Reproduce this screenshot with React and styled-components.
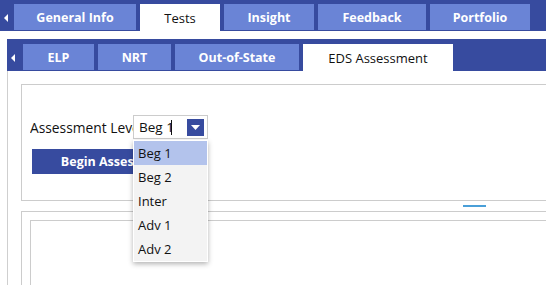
import React from 'react';
import styled, { createGlobalStyle } from 'styled-components';

const mainTabs = [
  { label: 'General Info', width: 122 },
  { label: 'Tests', width: 80, active: true },
  { label: 'Insight', width: 90 },
  { label: 'Feedback', width: 108 },
  { label: 'Portfolio', width: 100 },
];

const testTabs = [
  { label: 'ELP', width: 71 },
  { label: 'NRT', width: 73 },
  { label: 'Out-of-State', width: 124 },
  { label: 'EDS Assessment', width: 150, active: true },
];

const levels = ['Beg 1', 'Beg 2', 'Inter', 'Adv 1', 'Adv 2'];

export default function App() {
  return (
    <>
      <GlobalStyle />
      <Page>
        <TopBar>
          <ScrollArrow $width={14} />
          <TabList $gap={4}>
            {mainTabs.map((t) => (
              <MainTab key={t.label} $width={t.width} $active={t.active}>
                {t.label}
              </MainTab>
            ))}
          </TabList>
        </TopBar>

        <Section>
          <SubBar>
            <ScrollArrow $width={16} />
            <TabList $gap={4}>
              {testTabs.map((t) => (
                <MainTab key={t.label} $width={t.width} $active={t.active}>
                  {t.label}
                </MainTab>
              ))}
            </TabList>
          </SubBar>

          <Content>
            <Panel>
              <FieldRow>
                <Label>Assessment Level</Label>
                <SelectWrap>
                  <SelectBox>
                    <SelectValue>
                      Beg 1<Caret />
                    </SelectValue>
                    <SelectButton>
                      <svg width="9" height="5" viewBox="0 0 9 5">
                        <path d="M0 0h9L4.5 5z" fill="#fff" />
                      </svg>
                    </SelectButton>
                  </SelectBox>
                  <Menu>
                    {levels.map((l, i) => (
                      <MenuItem key={l} $selected={i === 0}>
                        {l}
                      </MenuItem>
                    ))}
                  </Menu>
                </SelectWrap>
              </FieldRow>
              <BeginButton>Begin Assessment</BeginButton>
            </Panel>

            <Divider>
              <Marker />
            </Divider>

            <Panel $tall>
              <InnerBox />
            </Panel>
          </Content>
        </Section>
      </Page>
    </>
  );
}

const GlobalStyle = createGlobalStyle`
  html, body {
    margin: 0;
    padding: 0;
    background: #fff;
    overflow: hidden;
  }
  body {
    font-family: "Open Sans", "Noto Sans", sans-serif;
  }
`;

const Page = styled.div`
  width: 546px;
  height: 285px;
  overflow: hidden;
`;

const TopBar = styled.div`
  display: flex;
  align-items: flex-start;
  height: 31px;
  padding-top: 4px;
  box-sizing: border-box;
  background: #374b9f;
`;

const ScrollArrow = styled.div`
  position: relative;
  flex: 0 0 ${({ $width }) => $width}px;
  align-self: stretch;
  &::before {
    content: '';
    position: absolute;
    left: 4px;
    top: 50%;
    margin-top: -4px;
    border-top: 4px solid transparent;
    border-bottom: 4px solid transparent;
    border-right: 4px solid #fff;
  }
`;

const TabList = styled.div`
  display: flex;
  gap: ${({ $gap }) => $gap}px;
`;

const MainTab = styled.div`
  display: flex;
  align-items: center;
  justify-content: center;
  width: ${({ $width }) => $width}px;
  height: ${({ $active }) => ($active ? 27 : 26)}px;
  background: ${({ $active }) => ($active ? '#fff' : '#6a84d6')};
  color: ${({ $active }) => ($active ? '#111' : '#fff')};
  font-size: ${({ $active }) => ($active ? 13 : 12.5)}px;
  font-weight: ${({ $active }) => ($active ? 500 : 700)};
  white-space: nowrap;
`;

const Section = styled.div`
  margin-top: 8px;
  margin-left: 7px;
`;

const SubBar = styled.div`
  display: flex;
  align-items: flex-start;
  height: 32px;
  padding-top: 5px;
  box-sizing: border-box;
  background: #374b9f;
`;

const Content = styled.div`
  border-left: 1px solid #cfcfcf;
  padding: 13px 0 0 13px;
  height: 220px;
`;

const Panel = styled.div`
  border: 1px solid #cccccc;
  border-right: none;
  height: ${({ $tall }) => ($tall ? 80 : 117)}px;
  padding: ${({ $tall }) => ($tall ? '8px 0 0 8px' : '30px 0 0 8px')};
  box-sizing: ${({ $tall }) => ($tall ? 'content-box' : 'border-box')};
`;

const FieldRow = styled.div`
  display: flex;
  align-items: center;
`;

const Label = styled.div`
  width: 103px;
  overflow: hidden;
  white-space: nowrap;
  font-size: 13.8px;
  color: #111;
`;

const SelectWrap = styled.div`
  position: relative;
  z-index: 2;
`;

const SelectBox = styled.div`
  display: flex;
  align-items: center;
  justify-content: space-between;
  width: 75px;
  height: 24px;
  box-sizing: border-box;
  border: 1px solid #cccccc;
  background: #fff;
  padding: 0 3px 0 5px;
`;

const SelectValue = styled.div`
  display: flex;
  align-items: center;
  font-size: 13.5px;
  color: #111;
`;

const Caret = styled.span`
  display: inline-block;
  width: 1px;
  height: 15px;
  background: #111;
  margin-left: -3px;
`;

const SelectButton = styled.div`
  display: flex;
  align-items: center;
  justify-content: center;
  width: 17px;
  height: 17px;
  background: #374b9f;
`;

const Menu = styled.div`
  position: absolute;
  top: 25px;
  left: 0;
  width: 75px;
  background: #f3f3f3;
  border: 1px solid #fff;
  box-sizing: border-box;
  box-shadow: 0 2px 5px rgba(0, 0, 0, 0.3);
`;

const MenuItem = styled.div`
  display: flex;
  align-items: center;
  height: 24px;
  padding-left: 4px;
  font-size: 13px;
  color: #111;
  background: ${({ $selected }) => ($selected ? '#b3c3ec' : 'transparent')};
`;

const BeginButton = styled.div`
  display: flex;
  align-items: center;
  justify-content: center;
  width: 170px;
  height: 25px;
  margin: 10px 0 0 2px;
  background: #374b9f;
  color: #fff;
  font-size: 12.5px;
  font-weight: 700;
  white-space: nowrap;
`;

const Divider = styled.div`
  height: 10px;
  padding-left: 442px;
  display: flex;
  align-items: center;
`;

const Marker = styled.div`
  width: 23px;
  height: 2px;
  background: #4a9fd8;
`;

const InnerBox = styled.div`
  height: 100%;
  border-left: 1px solid #cccccc;
  border-top: 1px solid #cccccc;
`;
